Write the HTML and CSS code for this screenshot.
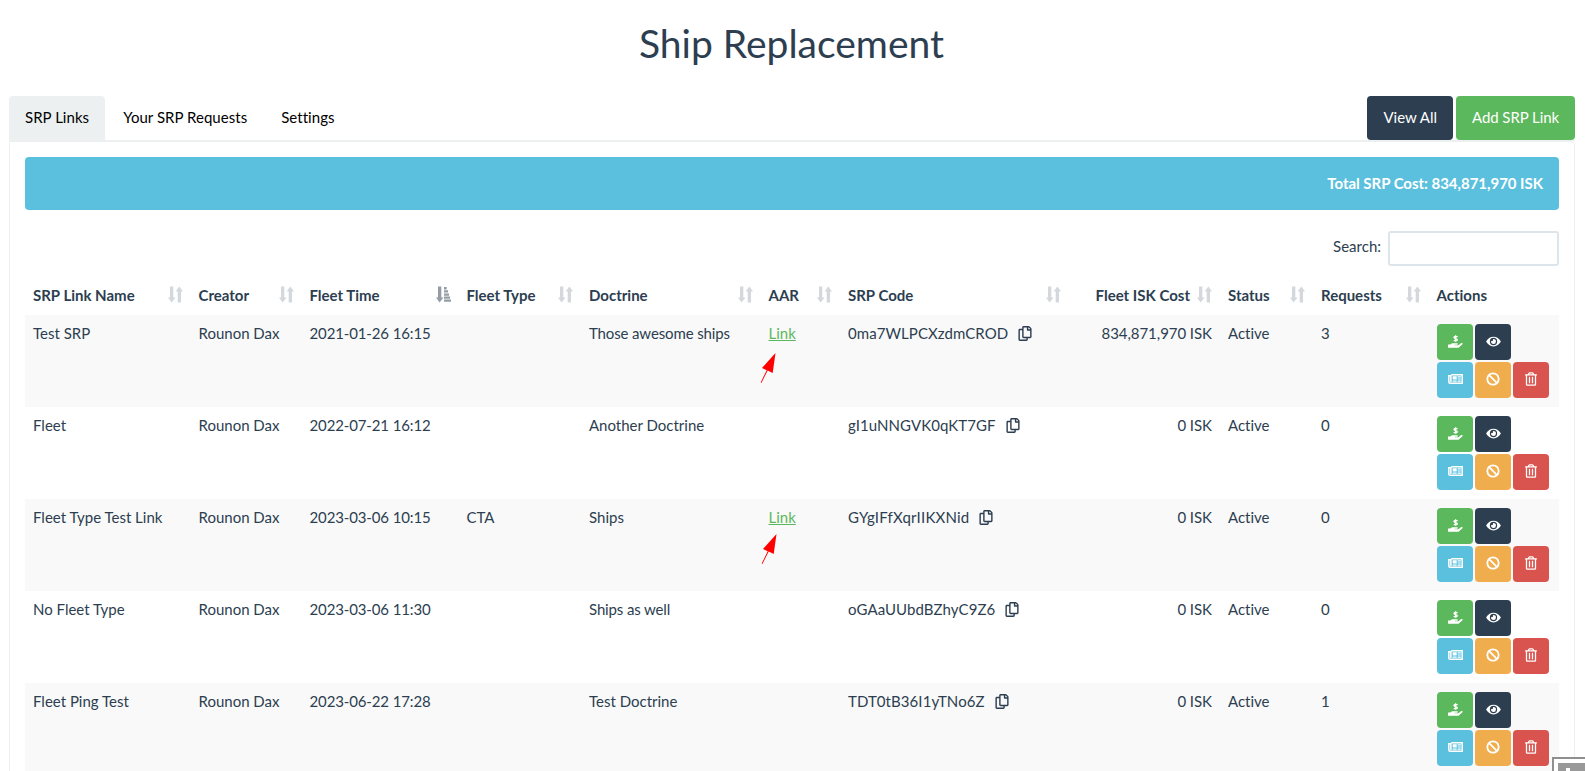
FILE: index.html
```html
<!DOCTYPE html>
<html lang="en">
<head>
<meta charset="utf-8">
<title>Ship Replacement</title>
<link rel="stylesheet" href="styles.css">
</head>
<body>
<svg class="defs" width="0" height="0">
  <symbol id="sort" viewBox="0 0 15 17"><path d="M2 .5h3.300v11h2.200L3.600 16.500 0 11.500h2zM9.700 16.500H13V5.500h2L11.300.5 7.700 5.500h2z"/></symbol>
  <symbol id="sorted" viewBox="0 0 15 17"><path d="M2 .5h3.300v11h2.200L3.600 16.500 0 11.500h2zM8 1h2.700v2.400H8zM8 4.200h4v2.400H8zM8 7.400h5v2.400H8zM8 10.500h6v2.200H8zM8 13.400h7v2.300H8z"/></symbol>
  <symbol id="copy" viewBox="0 0 448 512"><path d="M433.941 65.941l-51.882-51.882A48 48 0 0 0 348.118 0H176c-26.510 0-48 21.490-48 48v48H48c-26.510 0-48 21.490-48 48v320c0 26.510 21.490 48 48 48h224c26.510 0 48-21.490 48-48v-48h80c26.510 0 48-21.490 48-48V99.882a48 48 0 0 0-14.059-33.941zM266 464H54a6 6 0 0 1-6-6V150a6 6 0 0 1 6-6h74v224c0 26.510 21.490 48 48 48h96v42a6 6 0 0 1-6 6zm128-96H182a6 6 0 0 1-6-6V54a6 6 0 0 1 6-6h106v88c0 13.255 10.745 24 24 24h88v202a6 6 0 0 1-6 6zm6-256h-64V48h9.632c1.591 0 3.117.632 4.243 1.757l48.368 48.368a6 6 0 0 1 1.757 4.243V112z"/></symbol>
  <symbol id="eye" viewBox="0 0 576 512"><path d="M572.520 241.400C518.290 135.590 410.930 64 288 64S57.680 135.640 3.480 241.410a32.350 32.350 0 0 0 0 29.190C57.710 376.410 165.070 448 288 448s230.320-71.640 284.520-177.410a32.350 32.350 0 0 0 0-29.190zM288 400a144 144 0 1 1 144-144 143.930 143.930 0 0 1-144 144zm0-240a95.310 95.310 0 0 0-25.310 3.790 47.850 47.850 0 0 1-66.900 66.900A95.780 95.780 0 1 0 288 160z"/></symbol>
  <symbol id="trash" viewBox="0 0 448 512"><path d="M268 416h24a12 12 0 0 0 12-12V188a12 12 0 0 0-12-12h-24a12 12 0 0 0-12 12v216a12 12 0 0 0 12 12zM432 80h-82.410l-34-56.700A48 48 0 0 0 274.410 0H173.590a48 48 0 0 0-41.160 23.300L98.410 80H16A16 16 0 0 0 0 96v16a16 16 0 0 0 16 16h16v336a48 48 0 0 0 48 48h288a48 48 0 0 0 48-48V128h16a16 16 0 0 0 16-16V96a16 16 0 0 0-16-16zM171.840 50.910A6 6 0 0 1 177 48h94a6 6 0 0 1 5.150 2.910L293.610 80H154.390zM368 464H80V128h288zm-212-48h24a12 12 0 0 0 12-12V188a12 12 0 0 0-12-12h-24a12 12 0 0 0-12 12v216a12 12 0 0 0 12 12z"/></symbol>
  <symbol id="pay" viewBox="0 0 15 14"><path d="M0 9.500h2.200c1-.9 2-1.300 3.200-1.300h3.700c1 0 1.100 1.500 0 1.500H6.800v.5h3.600l2.800-2.100c.9-.6 2 .3 1.300 1.200l-3.400 2.900c-.5.400-1 .6-1.600.6H0z"/><path d="M9.500 2C8.800 1.200 6 1 6 2.400 6 3.900 9.300 3.200 9.300 4.700 9.300 6.100 6.600 6 5.800 5.100M7.600.2v6.500" fill="none" stroke="currentColor" stroke-width="1.300"/></symbol>
  <symbol id="news" viewBox="0 0 15 12"><path d="M3.200 1.700h11v8.600H2.100c-.8 0-1.300-.5-1.300-1.300V2.700h2.100V9" fill="none" stroke="currentColor" stroke-width="1.500"/><path d="M4.700 3.300h4v3.200h-4zM9.700 3.300h3.100v1.200H9.700zM9.700 5.400h3.100v1.200H9.700zM4.700 7.500h4v1.200h-4zM9.700 7.500h3.100v1.200H9.700z"/></symbol>
  <symbol id="ban" viewBox="0 0 14 14"><g fill="none" stroke="currentColor" stroke-width="1.800"><circle cx="7" cy="7" r="5.700"/><path d="M3.200 3.200l7.600 7.600"/></g></symbol>
  <symbol id="arrow" viewBox="0 0 16 32"><path d="M15.500 1L2 16l4.700 2.200L.7 30.500l.7.400 6.300-12.300 5 2.400z"/></symbol>
</svg>

<h1 class="title">Ship Replacement</h1>
<main class="page">
  <nav class="tabs">
    <a class="tab active">SRP Links</a>
    <a class="tab">Your SRP Requests</a>
    <a class="tab">Settings</a>
    <div class="tools"><button class="btn dark">View All</button><button class="btn green add">Add SRP Link</button></div>
  </nav>
  <section class="panel">
    <div class="total">Total SRP Cost: 834,871,970 ISK</div>
    <div class="filter"><label for="q">Search:</label><input id="q" type="text"></div>
    <table class="links">
      <colgroup><col class="c-name"><col class="c-creator"><col class="c-time"><col class="c-type"><col class="c-doctrine"><col class="c-aar"><col class="c-code"><col class="c-cost"><col class="c-status"><col class="c-requests"><col></colgroup>
      <thead><tr>
        <th>SRP Link Name<svg class="sort"><use href="#sort"/></svg></th>
        <th>Creator<svg class="sort"><use href="#sort"/></svg></th>
        <th>Fleet Time<svg class="sort on"><use href="#sorted"/></svg></th>
        <th>Fleet Type<svg class="sort"><use href="#sort"/></svg></th>
        <th>Doctrine<svg class="sort"><use href="#sort"/></svg></th>
        <th>AAR<svg class="sort"><use href="#sort"/></svg></th>
        <th>SRP Code<svg class="sort"><use href="#sort"/></svg></th>
        <th class="cost-head">Fleet ISK Cost<svg class="sort"><use href="#sort"/></svg></th>
        <th>Status<svg class="sort"><use href="#sort"/></svg></th>
        <th>Requests<svg class="sort"><use href="#sort"/></svg></th>
        <th>Actions</th>
      </tr></thead>
      <tbody>
        <tr>
          <td>Test SRP</td><td>Rounon Dax</td><td class="time">2021-01-26 16:15</td><td></td><td class="tight">Those awesome ships</td>
          <td class="aar"><a class="link">Link</a><svg class="pointer"><use href="#arrow"/></svg></td>
          <td class="code">0ma7WLPCXzdmCROD<svg class="copy"><use href="#copy"/></svg></td><td class="cost">834,871,970 ISK</td><td>Active</td><td>3</td>
          <td><div class="actions"><a class="act green"><svg class="i-pay"><use href="#pay"/></svg></a><a class="act dark"><svg class="i-eye"><use href="#eye"/></svg></a><a class="act blue"><svg class="i-news"><use href="#news"/></svg></a><a class="act orange"><svg class="i-ban"><use href="#ban"/></svg></a><a class="act red"><svg class="i-trash"><use href="#trash"/></svg></a></div></td>
        </tr>
        <tr>
          <td>Fleet</td><td>Rounon Dax</td><td class="time">2022-07-21 16:12</td><td></td><td>Another Doctrine</td>
          <td></td>
          <td class="code">gI1uNNGVK0qKT7GF<svg class="copy"><use href="#copy"/></svg></td><td class="cost">0 ISK</td><td>Active</td><td>0</td>
          <td><div class="actions"><a class="act green"><svg class="i-pay"><use href="#pay"/></svg></a><a class="act dark"><svg class="i-eye"><use href="#eye"/></svg></a><a class="act blue"><svg class="i-news"><use href="#news"/></svg></a><a class="act orange"><svg class="i-ban"><use href="#ban"/></svg></a><a class="act red"><svg class="i-trash"><use href="#trash"/></svg></a></div></td>
        </tr>
        <tr>
          <td>Fleet Type Test Link</td><td>Rounon Dax</td><td class="time">2023-03-06 10:15</td><td>CTA</td><td>Ships</td>
          <td class="aar"><a class="link">Link</a><svg class="pointer near"><use href="#arrow"/></svg></td>
          <td class="code wide">GYgIFfXqrIIKXNid<svg class="copy"><use href="#copy"/></svg></td><td class="cost">0 ISK</td><td>Active</td><td>0</td>
          <td><div class="actions"><a class="act green"><svg class="i-pay"><use href="#pay"/></svg></a><a class="act dark"><svg class="i-eye"><use href="#eye"/></svg></a><a class="act blue"><svg class="i-news"><use href="#news"/></svg></a><a class="act orange"><svg class="i-ban"><use href="#ban"/></svg></a><a class="act red"><svg class="i-trash"><use href="#trash"/></svg></a></div></td>
        </tr>
        <tr>
          <td>No Fleet Type</td><td>Rounon Dax</td><td class="time">2023-03-06 11:30</td><td></td><td class="tight">Ships as well</td>
          <td></td>
          <td class="code">oGAaUUbdBZhyC9Z6<svg class="copy"><use href="#copy"/></svg></td><td class="cost">0 ISK</td><td>Active</td><td>0</td>
          <td><div class="actions"><a class="act green"><svg class="i-pay"><use href="#pay"/></svg></a><a class="act dark"><svg class="i-eye"><use href="#eye"/></svg></a><a class="act blue"><svg class="i-news"><use href="#news"/></svg></a><a class="act orange"><svg class="i-ban"><use href="#ban"/></svg></a><a class="act red"><svg class="i-trash"><use href="#trash"/></svg></a></div></td>
        </tr>
        <tr>
          <td>Fleet Ping Test</td><td>Rounon Dax</td><td class="time">2023-06-22 17:28</td><td></td><td>Test Doctrine</td>
          <td></td>
          <td class="code">TDT0tB36I1yTNo6Z<svg class="copy"><use href="#copy"/></svg></td><td class="cost">0 ISK</td><td>Active</td><td>1</td>
          <td><div class="actions"><a class="act green"><svg class="i-pay"><use href="#pay"/></svg></a><a class="act dark"><svg class="i-eye"><use href="#eye"/></svg></a><a class="act blue"><svg class="i-news"><use href="#news"/></svg></a><a class="act orange"><svg class="i-ban"><use href="#ban"/></svg></a><a class="act red"><svg class="i-trash"><use href="#trash"/></svg></a></div></td>
        </tr>
      </tbody>
    </table>
  </section>
</main>
<div class="corner"><div class="corner-box"><span class="corner-mark"></span></div></div>
</body>
</html>
```
FILE: styles.css
```css
* { box-sizing: border-box; }
html, body { height: 100%; }
body {
  margin: 0;
  overflow: hidden;
  background: #fff;
  color: #2c3e50;
  font: 15px/21px Lato, "Liberation Sans", sans-serif;
  font-variant-ligatures: none;
}
svg { fill: currentColor; }
.defs { position: absolute; }
.title {
  margin: 0;
  padding: 22px 2px 0 0;
  height: 96px;
  font-size: 39px;
  line-height: 43px;
  font-weight: 400;
  text-align: center;
}
.page { height: 675px; padding: 0 10px 0 9px; overflow: hidden; }
.tabs { display: flex; height: 45px; border-bottom: 1px solid #ecf0f1; }
.tab {
  height: 45px;
  margin-right: 2px;
  padding: 11px 16px;
  color: #000;
  border-radius: 4px 4px 0 0;
  letter-spacing: .04px;
}
.active { background: #ecf0f1; }
.tools { display: flex; gap: 3px; height: 44px; margin-left: auto; }
.btn {
  border: 0;
  border-radius: 4px;
  padding: 0 16px 2px;
  color: #fff;
  font: inherit;
}
.add { letter-spacing: -.08px; }
.dark { background: #2c3e50; }
.green { background: #5cb85c; }
.blue { background: #5bc0de; }
.orange { background: #f0ad4e; }
.red { background: #d9534f; }
.panel {
  border: 1px solid #ecf0f1;
  border-radius: 0 4px 0 0;
  padding: 15px 15px 60px;
}
.total {
  height: 53px;
  padding: 16px;
  border-radius: 4px;
  background: #5bc0de;
  color: #fff;
  font-weight: 700;
  text-align: right;
  letter-spacing: -.03px;
}
.filter {
  display: flex;
  justify-content: flex-end;
  gap: 7px;
  padding: 21px 0 6px;
}
.filter label { padding-top: 5px; }
.filter input {
  width: 171px;
  height: 35px;
  border: 2px solid #dce4ec;
  border-radius: 3px;
  background: #fff;
}
.links { width: 100%; table-layout: fixed; border-collapse: collapse; }
.c-name { width: 165.500px; }
.c-creator { width: 111px; }
.c-time { width: 157px; }
.c-type { width: 122.500px; }
.c-doctrine { width: 179.500px; }
.c-aar { width: 79.500px; }
.c-code { width: 229px; }
.c-cost { width: 151px; }
.c-status { width: 93px; }
.c-requests { width: 115.500px; }
th, td { padding: 8px; text-align: left; vertical-align: top; white-space: nowrap; }
th { position: relative; height: 43px; padding-top: 13px; font-weight: 700; }
th.cost-head { padding-right: 30px; text-align: right; }
td.cost { text-align: right; letter-spacing: -.05px; }
td { height: 92px; }
.time, .tight { letter-spacing: -.13px; }
.code { letter-spacing: .07px; }
.wide { letter-spacing: .19px; }
tbody tr:nth-child(odd) { background: #f9f9f9; }
.sort { position: absolute; right: 8px; top: 14px; width: 15px; height: 17px; opacity: .2; }
.sort.on { opacity: .5; }
.aar { position: relative; }
.link { color: #5cb85c; text-decoration: underline; }
.pointer { position: absolute; left: -1px; top: 37px; width: 16px; height: 32px; color: #f00; }
.near { left: 0; top: 34px; }
.copy { width: 14px; height: 15px; margin-left: 10px; vertical-align: -2px; }
.actions { display: flex; flex-wrap: wrap; gap: 2px; width: 114px; padding-top: 1px; }
.act {
  display: flex;
  align-items: center;
  justify-content: center;
  width: 36px;
  height: 36px;
  border-radius: 4px;
  color: #fff;
}
.act:nth-child(2) { margin-right: 30px; }
.i-pay { width: 15px; height: 14px; margin: 0 0 1px 1px; }
.i-eye { width: 15px; height: 13px; margin: 0 0 2px 1px; }
.i-news { width: 15px; height: 12px; margin: 0 0 2px 1px; }
.i-ban { width: 14px; height: 14px; margin-bottom: 2px; }
.i-trash { width: 12px; height: 14px; margin-bottom: 2px; }
.corner {
  position: fixed;
  right: 0;
  bottom: 0;
  width: 33px;
  height: 14px;
  padding: 4px 0 0 4px;
  border: solid #8f8f8f;
  border-width: 2px 0 0 2px;
  background: #fff;
}
.corner-box { display: flex; justify-content: flex-start; align-items: flex-end; height: 8px; padding-left: 8px; background: #999; }
.corner-mark { width: 4px; height: 3px; background: #fff; }
```
